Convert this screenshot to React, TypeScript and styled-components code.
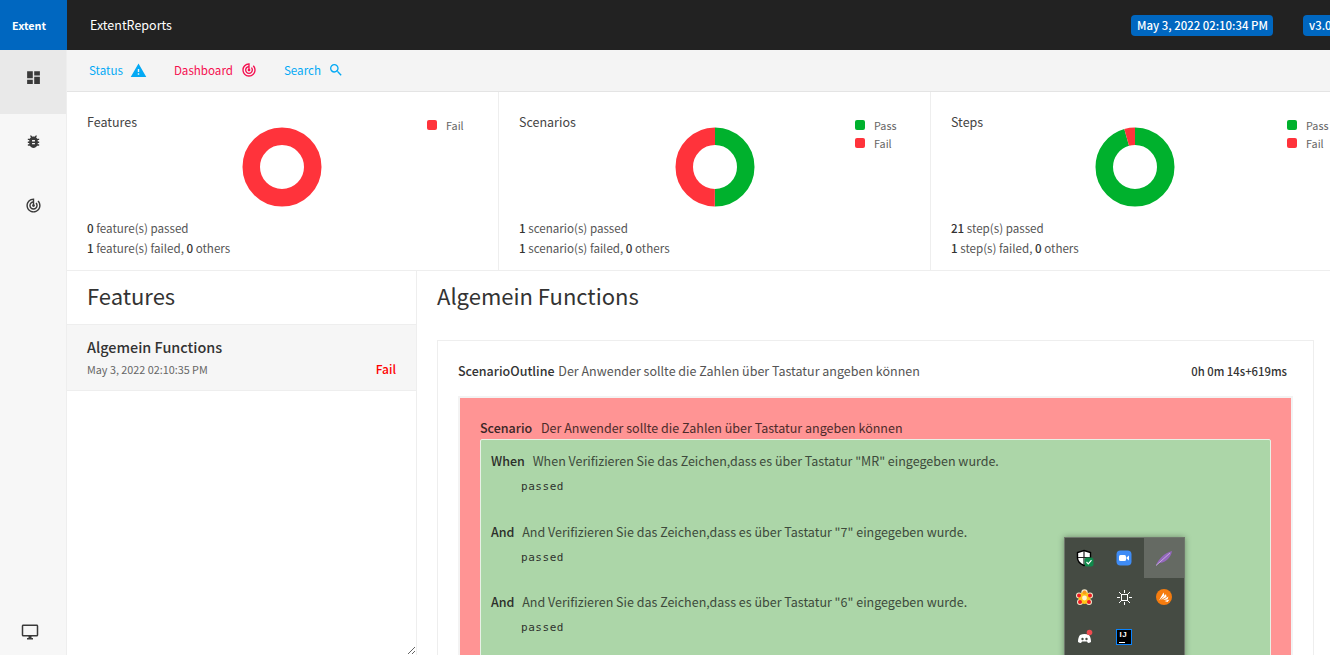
import React from "react";
import styled, { createGlobalStyle } from "styled-components";
import {
  MdBugReport,
  MdDashboard,
  MdOutlineDesktopWindows,
  MdSearch,
  MdTrackChanges,
  MdWarning,
} from "react-icons/md";

const FONT = `"Noto Sans CJK JP", "Noto Sans", sans-serif`;

const GlobalStyle = createGlobalStyle`
  html, body {
    margin: 0;
    height: 100%;
    overflow: hidden;
    background: #fff;
  }
  #root {
    height: 100%;
  }
  * {
    box-sizing: border-box;
  }
`;

const Page = styled.div`
  height: 655px;
  width: 1330px;
  display: flex;
  flex-direction: column;
  position: relative;
  overflow: hidden;
  font-family: ${FONT};
  font-size: 12.5px;
  color: #444;
`;

const TopBar = styled.header`
  height: 50px;
  flex: none;
  display: flex;
  align-items: center;
  background: #222;
`;

const Logo = styled.div`
  width: 67px;
  height: 50px;
  flex: none;
  padding-right: 9px;
  line-height: 50px;
  text-align: center;
  background: #0067c0;
  color: #fff;
  font-size: 10.8px;
  font-weight: 700;
`;

const Brand = styled.div`
  margin-left: 23px;
  flex: none;
  color: #fff;
  font-size: 12.5px;
  line-height: 50px;
`;

const Badges = styled.div`
  margin-left: 959px;
  flex: none;
  display: flex;
  gap: 30px;
`;

const Badge = styled.span<{ $width: number }>`
  width: ${(p) => p.$width}px;
  flex: none;
  height: 21px;
  line-height: 21px;
  padding: 0 6px;
  border-radius: 4px;
  background: #0067c0;
  color: #fff;
  font-size: 11.4px;
  font-weight: 500;
  white-space: nowrap;
`;

const Body = styled.div`
  flex: 1;
  min-height: 0;
  display: flex;
`;

const SideBar = styled.nav`
  width: 67px;
  flex: none;
  display: flex;
  flex-direction: column;
  background: #f7f7f7;
  border-right: 1px solid #eee;
`;

const SideItem = styled.div<{ $active?: boolean }>`
  height: 64px;
  display: flex;
  align-items: center;
  justify-content: center;
  padding-bottom: 10px;
  font-size: 17px;
  color: #3a3a3a;
  background: ${(p) => (p.$active ? "#e9e9e9" : "transparent")};
`;

const SideBottom = styled(SideItem)`
  margin-top: auto;
  height: 46px;
  padding: 0 6px 0 0;
  font-size: 18px;
`;

const Main = styled.main`
  flex: 1;
  min-width: 0;
  display: flex;
  flex-direction: column;
`;

const SubNav = styled.div`
  height: 42px;
  flex: none;
  display: flex;
  align-items: center;
  padding-left: 22px;
  padding-bottom: 1px;
  background: #f4f4f4;
  border-bottom: 1px solid #e4e4e4;
`;

const SubLink = styled.a<{ $color: string; $gap: number }>`
  display: flex;
  align-items: center;
  gap: ${(p) => p.$gap}px;
  margin-right: 27px;
  color: ${(p) => p.$color};
  font-size: 11.6px;
  line-height: 20px;
`;

const Cards = styled.section`
  height: 179px;
  flex: none;
  display: flex;
  border-bottom: 1px solid #eee;
`;

const Card = styled.div`
  width: 432px;
  flex: none;
  padding: 20px 20px 0;
  border-right: 1px solid #eee;
`;

const ChartRow = styled.div`
  height: 106px;
  display: flex;
  align-items: flex-start;
`;

const CardTitle = styled.div<{ $width: number }>`
  width: ${(p) => p.$width}px;
  flex: none;
  font-size: 12.5px;
  line-height: 20px;
  color: #444;
`;

const Donut = styled.svg`
  display: block;
  flex: none;
  margin-top: 15px;
`;

const Legend = styled.ul<{ $left: number }>`
  list-style: none;
  margin: 4px 0 0 ${(p) => p.$left}px;
  padding: 0;
  flex: none;
`;

const LegendItem = styled.li`
  display: flex;
  align-items: center;
  gap: 9px;
  height: 18px;
  font-size: 10.8px;
  color: #666;
`;

const Swatch = styled.i<{ $color: string }>`
  width: 10px;
  height: 10px;
  border-radius: 2px;
  background: ${(p) => p.$color};
`;

const Stat = styled.div`
  font-size: 11.6px;
  line-height: 20px;
  color: #555;

  b {
    font-weight: 500;
    color: #333;
  }
`;

const Split = styled.div`
  flex: 1;
  min-height: 0;
  display: flex;
`;

const ListPanel = styled.aside`
  width: 350px;
  flex: none;
  overflow: auto;
  resize: horizontal;
  border-right: 1px solid #eee;
`;

const PanelTitle = styled.h2`
  margin: 0;
  height: 53px;
  padding: 7px 20px 0;
  font-size: 22px;
  font-weight: 400;
  line-height: 34px;
  color: #333;
`;

const DetailTitle = styled(PanelTitle)`
  padding-left: 0;
`;

const FeatureRow = styled.div`
  height: 67px;
  padding: 11px 20px 0;
  background: #f6f6f6;
  border-top: 1px solid #eee;
  border-bottom: 1px solid #eee;
`;

const FeatureName = styled.div`
  font-size: 14.4px;
  line-height: 21px;
  font-weight: 500;
  color: #333;
`;

const FeatureMeta = styled.div`
  display: flex;
  justify-content: space-between;
  margin-top: 3px;
  font-size: 10.8px;
  line-height: 18px;
  color: #666;
`;

const FailText = styled.span`
  color: #f00;
  font-size: 12px;
  font-weight: 500;
`;

const Detail = styled.div`
  flex: 1;
  min-width: 0;
  overflow: hidden;
  padding: 0 16px 0 20px;
`;

const DetailCard = styled.div`
  margin-top: 16px;
  padding: 20px 20px 0;
  height: 400px;
  border: 1px solid #eee;
`;

const OutlineHead = styled.div`
  height: 35px;
  display: flex;
  justify-content: space-between;
  align-items: flex-start;
  font-size: 12.5px;
  line-height: 20px;
  color: #555;

  b {
    font-weight: 500;
    color: #333;
    margin-right: 1px;
  }
`;

const Duration = styled.span`
  margin-right: 6px;
  font-size: 11.3px;
  font-weight: 500;
  color: #333;
`;

const ScenarioBox = styled.div`
  height: 400px;
  padding: 20px 20px 0;
  background: #ff9494;
  border: 2px solid #f3f3f3;
  border-bottom: 0;
  color: #4d2b2b;
  font-size: 12.5px;
  line-height: 20px;

  b {
    font-weight: 500;
    color: #3a2626;
    margin-right: 6px;
  }
`;

const StepBox = styled.div`
  margin-top: 1px;
  padding: 11px 10px 0;
  height: 300px;
  background: #acd6a8;
  border: 1px solid #e8f1e6;
  border-radius: 2px;
`;

const Step = styled.div`
  height: 70.5px;
  color: #3d4a3b;
  font-size: 12.5px;
  line-height: 20px;

  b {
    color: #2c2f2a;
    margin-right: 5px;
  }
`;

const StepOutput = styled.pre`
  margin: 5px 0 0 30px;
  font-family: "DejaVu Sans Mono", "Liberation Mono", monospace;
  font-size: 11px;
  letter-spacing: 0.55px;
  line-height: 21px;
  color: #2f332e;
`;

const Tray = styled.div`
  position: absolute;
  left: 1064px;
  top: 537px;
  width: 121px;
  height: 130px;
  display: grid;
  grid-template-columns: repeat(3, 1fr);
  grid-auto-rows: 39.5px;
  background: #454b43;
  border: 1px solid #6f776c;
  box-shadow: 0 0 6px rgba(0, 0, 0, 0.35);
`;

const TrayCell = styled.div<{ $hot?: boolean }>`
  display: flex;
  align-items: center;
  justify-content: center;
  background: ${(p) => (p.$hot ? "#656a63" : "transparent")};
`;

const IdeaIcon = styled.div`
  width: 16px;
  height: 16px;
  padding: 1px 0 0 2px;
  background: #000;
  border: 1px solid #0a84ff;
  color: #fff;
  font-family: "Liberation Sans", sans-serif;
  font-size: 8px;
  line-height: 8px;
  font-weight: 700;
  letter-spacing: 0.5px;
  position: relative;

  &::after {
    content: "";
    position: absolute;
    left: 2px;
    bottom: 1px;
    width: 6px;
    height: 1px;
    background: #fff;
  }
`;

type Slice = { value: number; color: string };

// donut drawn from the top, clockwise, like the chart in the report
const DonutChart: React.FC<{ slices: Slice[] }> = ({ slices }) => {
  const r = 30.75;
  const len = 2 * Math.PI * r;
  const total = slices.reduce((s, x) => s + x.value, 0);
  let start = 0;
  return (
    <Donut width="80" height="80" viewBox="0 0 80 80">
      {slices.map((s) => {
        const part = (s.value / total) * len;
        const el = (
          <circle
            key={s.color}
            cx="40"
            cy="40"
            r={r}
            fill="none"
            stroke={s.color}
            strokeWidth="17.5"
            strokeDasharray={`${part} ${len - part}`}
            strokeDashoffset={-start}
            transform="rotate(-90 40 40)"
          />
        );
        start += part;
        return el;
      })}
    </Donut>
  );
};

const GREEN = "#00b12d";
const RED = "#ff333b";

const cards = [
  {
    title: "Features",
    titleWidth: 155,
    legendLeft: 105,
    slices: [{ value: 1, color: RED }],
    legend: [{ name: "Fail", color: RED }],
    noun: "feature(s)",
    passed: 0,
    failed: 1,
  },
  {
    title: "Scenarios",
    titleWidth: 156,
    legendLeft: 100,
    slices: [
      { value: 1, color: GREEN },
      { value: 1, color: RED },
    ],
    legend: [
      { name: "Pass", color: GREEN },
      { name: "Fail", color: RED },
    ],
    noun: "scenario(s)",
    passed: 1,
    failed: 1,
  },
  {
    title: "Steps",
    titleWidth: 144,
    legendLeft: 112,
    slices: [
      { value: 21, color: GREEN },
      { value: 1, color: RED },
    ],
    legend: [
      { name: "Pass", color: GREEN },
      { name: "Fail", color: RED },
    ],
    noun: "step(s)",
    passed: 21,
    failed: 1,
  },
];

const steps = [
  { key: "When", text: 'When Verifizieren Sie das Zeichen,dass es über Tastatur "MR" eingegeben wurde.' },
  { key: "And", text: 'And Verifizieren Sie das Zeichen,dass es über Tastatur "7" eingegeben wurde.' },
  { key: "And", text: 'And Verifizieren Sie das Zeichen,dass es über Tastatur "6" eingegeben wurde.' },
];

const ShieldIcon = () => (
  <svg width="18" height="18" viewBox="0 0 18 18">
    <path d="M8 1.500l6.500 2V9c0 3.500-3 6-6.500 7.500C4.500 15 1.500 12.500 1.500 9V3.500z" fill="#fff" stroke="#000" strokeWidth="1.400" />
    <path d="M8 2v14M2 8.500h12" stroke="#222" strokeWidth="1.200" />
    <rect x="8.500" y="8.500" width="9" height="9" rx="2.500" fill="#0f8a4b" />
    <path d="M10.500 13l1.800 1.800 3.200-3.600" stroke="#fff" strokeWidth="1.200" fill="none" />
  </svg>
);

const ZoomIcon = () => (
  <svg width="16" height="16" viewBox="0 0 16 16">
    <rect width="15" height="15" x="0.5" y="0.5" rx="4" fill="#3f8cf5" />
    <rect x="3" y="5" width="7" height="6" rx="1.500" fill="#fff" />
    <path d="M10.500 7.500L13 5.500v5l-2.500-2z" fill="#fff" />
  </svg>
);

const FeatherIcon = () => (
  <svg width="18" height="18" viewBox="0 0 18 18">
    <path d="M1 16C4 10 9 4 17 2c-1 6-6 12-13 12z" fill="#9468bd" />
    <path d="M1 16.500L15 4" stroke="#c6a9e0" strokeWidth="1" />
  </svg>
);

const FlowerIcon = () => (
  <svg width="17" height="17" viewBox="0 0 17 17">
    <circle cx="8.500" cy="3.500" r="3.200" fill="#f4e6c8" />
    <circle cx="3" cy="6.500" r="3" fill="#f4e6c8" />
    <circle cx="14" cy="6.500" r="3" fill="#f4e6c8" />
    <circle cx="4" cy="13" r="3" fill="#f4e6c8" />
    <circle cx="13" cy="13" r="3" fill="#f4e6c8" />
    <circle cx="8.500" cy="9" r="6" fill="#ffc61a" />
    <circle cx="3" cy="6.500" r="2" fill="#ee1c25" />
    <circle cx="14" cy="6.500" r="2" fill="#ee1c25" />
    <circle cx="4" cy="13" r="2" fill="#ee1c25" />
    <circle cx="13" cy="13" r="2" fill="#ee1c25" />
    <circle cx="8.500" cy="3.500" r="2" fill="#f79a1e" />
    <circle cx="8.500" cy="9" r="2.400" fill="#fff6d0" />
  </svg>
);

const SunIcon = () => (
  <svg width="15" height="15" viewBox="0 0 15 15" fill="none" stroke="#fff" strokeWidth="1">
    <rect x="4.500" y="4.500" width="6" height="6" />
    <path d="M7.500 0v3M7.500 12v3M0 7.500h3M12 7.500h3M2 2l2 2M11 11l2 2M13 2l-2 2M4 11l-2 2" />
  </svg>
);

const OrangeIcon = () => (
  <svg width="16" height="16" viewBox="0 0 16 16">
    <circle cx="8" cy="8" r="8" fill="#f57c0f" />
    <path d="M3 11.500L7.500 3.500l1 3zM5 11L10 5l.5 3zM7 11l5.500-3.500-1 3zM8.500 12l5-1.500-2 2.500z" fill="#fff" />
  </svg>
);

const DiscordIcon = () => (
  <svg width="16" height="16" viewBox="0 0 16 16">
    <path d="M3 6c3-1.500 6-1.500 9 0 1.500 2 2 4 2 7-1 .7-2 1-3 1l-1-1.500H5L4 14c-1 0-2-.3-3-1 0-3 .5-5 2-7z" fill="#fff" />
    <circle cx="5.500" cy="10" r="1.200" fill="#454b43" />
    <circle cx="9.500" cy="10" r="1.200" fill="#454b43" />
    <circle cx="12.500" cy="3.500" r="2.800" fill="#ef4b4f" />
  </svg>
);

const App: React.FC = () => {
  return (
    <Page>
      <GlobalStyle />
      <TopBar>
        <Logo>Extent</Logo>
        <Brand>ExtentReports</Brand>
        <Badges>
          <Badge $width={142}>May 3, 2022 02:10:34 PM</Badge>
          <Badge $width={46}>v3.0.0</Badge>
        </Badges>
      </TopBar>
      <Body>
        <SideBar>
          <SideItem $active><MdDashboard /></SideItem>
          <SideItem><MdBugReport /></SideItem>
          <SideItem><MdTrackChanges /></SideItem>
          <SideBottom><MdOutlineDesktopWindows /></SideBottom>
        </SideBar>
        <Main>
          <SubNav>
            <SubLink $color="#03a9f4" $gap={7}>Status <MdWarning size={17} /></SubLink>
            <SubLink $color="#f50f4f" $gap={8}>Dashboard <MdTrackChanges size={16} /></SubLink>
            <SubLink $color="#03a9f4" $gap={7}>Search <MdSearch size={16} /></SubLink>
          </SubNav>
          <Cards>
            {cards.map((c) => (
              <Card key={c.title}>
                <ChartRow>
                  <CardTitle $width={c.titleWidth}>{c.title}</CardTitle>
                  <DonutChart slices={c.slices} />
                  <Legend $left={c.legendLeft}>
                    {c.legend.map((l) => (
                      <LegendItem key={l.name}>
                        <Swatch $color={l.color} />
                        {l.name}
                      </LegendItem>
                    ))}
                  </Legend>
                </ChartRow>
                <Stat><b>{c.passed}</b> {c.noun} passed</Stat>
                <Stat><b>{c.failed}</b> {c.noun} failed, <b>0</b> others</Stat>
              </Card>
            ))}
          </Cards>
          <Split>
            <ListPanel>
              <PanelTitle>Features</PanelTitle>
              <FeatureRow>
                <FeatureName>Algemein Functions</FeatureName>
                <FeatureMeta>
                  May 3, 2022 02:10:35 PM
                  <FailText>Fail</FailText>
                </FeatureMeta>
              </FeatureRow>
            </ListPanel>
            <Detail>
              <DetailTitle>Algemein Functions</DetailTitle>
              <DetailCard>
                <OutlineHead>
                  <span><b>ScenarioOutline</b> Der Anwender sollte die Zahlen über Tastatur angeben können</span>
                  <Duration>0h 0m 14s+619ms</Duration>
                </OutlineHead>
                <ScenarioBox>
                  <b>Scenario</b> Der Anwender sollte die Zahlen über Tastatur angeben können
                  <StepBox>
                    {steps.map((s) => (
                      <Step key={s.text}>
                        <b>{s.key}</b> {s.text}
                        <StepOutput>passed</StepOutput>
                      </Step>
                    ))}
                  </StepBox>
                </ScenarioBox>
              </DetailCard>
            </Detail>
          </Split>
        </Main>
      </Body>
      <Tray>
        <TrayCell><ShieldIcon /></TrayCell>
        <TrayCell><ZoomIcon /></TrayCell>
        <TrayCell $hot><FeatherIcon /></TrayCell>
        <TrayCell><FlowerIcon /></TrayCell>
        <TrayCell><SunIcon /></TrayCell>
        <TrayCell><OrangeIcon /></TrayCell>
        <TrayCell><DiscordIcon /></TrayCell>
        <TrayCell><IdeaIcon>IJ</IdeaIcon></TrayCell>
      </Tray>
    </Page>
  );
};

export default App;
